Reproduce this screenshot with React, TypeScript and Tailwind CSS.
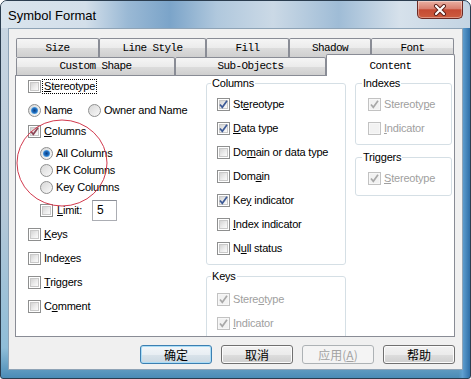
import type { ReactNode } from 'react';

function Box({ checked, disabled, mark = '#3d5a96' }: { checked?: boolean; disabled?: boolean; mark?: string }) {
    return (
        <span
            className={`relative flex h-[13px] w-[13px] shrink-0 items-center justify-center border ${
                disabled ? 'border-[#c2c2c2] bg-[#f7f7f7]' : 'border-[#8e8f8f] bg-white'
            }`}
        >
            <span
                className={`h-[9px] w-[9px] ${
                    disabled
                        ? 'bg-[#f2f2f2]'
                        : 'border border-[#c9c9c9] bg-[linear-gradient(135deg,#d4d4d4_0%,#eeeeee_60%,#fbfbfb_100%)]'
                }`}
            />
            {checked ? (
                <svg className="absolute left-0 top-0" width="11" height="11" viewBox="0 0 11 11">
                    <path d="M2 5.5 L4.3 8.3 L9 1.8" fill="none" stroke={disabled ? '#a8a8a8' : mark} strokeWidth="1.7" />
                </svg>
            ) : null}
        </span>
    );
}

function Radio({ on }: { on?: boolean }) {
    return (
        <span className="flex h-[13px] w-[13px] shrink-0 items-center justify-center rounded-full border border-[#8e8f8f] bg-[linear-gradient(135deg,#d8d8d8,#fafafa)]">
            {on ? (
                <span className="h-[7px] w-[7px] rounded-full bg-[radial-gradient(circle,#0b3f7e_0%,#1f6cc0_45%,#6fbdf0_80%,#c8e9fb_100%)]" />
            ) : (
                <span className="h-[9px] w-[9px] rounded-full bg-[linear-gradient(135deg,#dadada,#f6f6f6)]" />
            )}
        </span>
    );
}

function Check({
    label,
    checked,
    disabled,
    mark,
    className = '',
}: {
    label: ReactNode;
    checked?: boolean;
    disabled?: boolean;
    mark?: string;
    className?: string;
}) {
    return (
        <div className={`flex items-center gap-[3px] ${disabled ? 'text-[#a0a0a0]' : ''} ${className}`}>
            <Box checked={checked} disabled={disabled} mark={mark} />
            <span>{label}</span>
        </div>
    );
}

function Group({ title, children, className = '', inset = 'pl-[10px]' }: { title: string; children: ReactNode; className?: string; inset?: string }) {
    return (
        <fieldset className={`rounded-[3px] border border-[#d5dfe5] ${className}`}>
            <legend className={`px-[1px] leading-[14px] ${inset === 'pl-[10px]' ? 'ml-[4px]' : 'ml-[6px]'}`}>{title}</legend>
            <div className={`flex flex-col pt-[2px] ${inset}`}>{children}</div>
        </fieldset>
    );
}

const tab =
    'flex items-center justify-center rounded-t-[2px] border border-b-0 border-[#898c95] bg-[linear-gradient(180deg,#f5f5f5_0%,#ebebeb_50%,#dcdcdc_52%,#cfcfcf_100%)]';

function Button({ children, kind = 'normal' }: { children: ReactNode; kind?: 'default' | 'normal' | 'disabled' }) {
    const look =
        kind === 'default'
            ? 'border-[#3c7fb1] bg-[linear-gradient(180deg,#f2f6f9_0%,#e8eef3_50%,#d9e3ea_52%,#cbd8e2_100%)] shadow-[inset_0_0_0_1px_#a9dcf6]'
            : kind === 'disabled'
              ? 'border-[#adb2b5] bg-[#f4f4f4] text-[#a3a3a3]'
              : 'border-[#707070] bg-[linear-gradient(180deg,#f2f2f2_0%,#ebebeb_50%,#dddddd_52%,#cfcfcf_100%)] shadow-[inset_0_0_0_1px_#fcfcfc]';
    return (
        <div className={`flex h-[19px] w-[72px] items-center justify-center rounded-[3px] border ${look}`}>
            <span className="font-['Noto_Sans_CJK_SC',sans-serif] text-[12px] leading-none tracking-normal">{children}</span>
        </div>
    );
}

export default function App() {
    return (
        <div className="relative flex h-[379px] w-[471px] flex-col overflow-hidden rounded-t-[7px] rounded-b-[3px] border border-[#2b3d4f] bg-[linear-gradient(90deg,rgba(0,0,0,0)_97.6%,#5f9fd0_98.4%,#2f6fa8_100%),linear-gradient(180deg,#cbd8e4_0%,#b5c8d8_55%,#8fbdd8_92%,#4b8cb6_100%)] font-['Liberation_Sans',Arial,sans-serif] text-[11px] tracking-[-0.2px] text-black">
            {/* title bar */}
            <div className="flex h-[27px] shrink-0 items-start justify-between bg-[linear-gradient(90deg,#d9e4ed_0%,#d3dfea_18%,#9ab9d5_27%,#7ba4c9_36%,#b0c8dd_46%,#cbd9e6_58%,#9fbcd6_72%,#d6e1eb_85%,#c3d4e3_100%)] pl-[7px]">
                <span className="pt-[7px] text-[13px] leading-[16px] tracking-normal">Symbol Format</span>
                <div className="mr-[7px] flex h-[18px] w-[46px] items-center justify-center rounded-b-[5px] border border-t-0 border-[#6b2a24] bg-[linear-gradient(180deg,#eab0a2_0%,#d88070_45%,#c54a33_52%,#cc5c3f_100%)] shadow-[inset_0_0_0_1px_rgba(255,255,255,0.35)]">
                    <svg width="14" height="12" viewBox="0 0 14 12">
                        <path d="M3 2 L11 10 M11 2 L3 10" stroke="#5a1e18" strokeWidth="4" strokeLinecap="round" />
                        <path d="M3 2 L11 10 M11 2 L3 10" stroke="#ffffff" strokeWidth="2.2" strokeLinecap="round" />
                    </svg>
                </div>
            </div>

            {/* client area */}
            <div className="mx-[7px] flex h-[342px] shrink-0 flex-col border border-[#8ea3b6] bg-[#f0f0f0] pl-[6px] pt-[9px]">
                <div className="flex h-[19px] pl-[1px] font-['Liberation_Mono',monospace] text-[11px] tracking-[-0.6px]">
                    <div className={`${tab} w-[83px]`}>Size</div>
                    <div className={`${tab} w-[107px]`}>Line Style</div>
                    <div className={`${tab} w-[83px]`}>Fill</div>
                    <div className={`${tab} w-[82px]`}>Shadow</div>
                    <div className={`${tab} w-[83px]`}>Font</div>
                </div>
                <div className="flex h-[18px] items-start pl-[1px] font-['Liberation_Mono',monospace] text-[11px] tracking-[-0.6px]">
                    <div className={`${tab} h-[18px] w-[159px]`}>Custom Shape</div>
                    <div className={`${tab} h-[18px] w-[151px]`}>Sub-Objects</div>
                    <div className="relative z-10 -mt-[3px] flex h-[22px] w-[129px] justify-center rounded-t-[2px] border border-b-0 border-[#898c95] bg-white pt-[3px]">
                        Content
                    </div>
                </div>

                {/* tab page */}
                <div className="flex h-[262px] w-[440px] overflow-hidden border border-[#898c95] bg-white pl-[12px]">
                    <div className="flex w-[178px] shrink-0 flex-col">
                        <div className="flex h-[20px] items-center gap-[1px]">
                            <Box />
                            <span className="border border-dotted border-black px-[1px] leading-[13px]">
                                <u>S</u>tereotype
                            </span>
                        </div>
                        <div className="mt-[4px] flex h-[20px] items-center">
                            <Radio on />
                            <span className="ml-[3px] w-[44px]">Name</span>
                            <Radio />
                            <span className="ml-[3px]">Owner and Name</span>
                        </div>
                        <Check className="mt-[1px] h-[20px]" checked mark="#8b4656" label={<><u>C</u>olumns</>} />
                        <div className="mt-[4px] flex h-[17px] items-center gap-[3px] pl-[12px]">
                            <Radio on />
                            <span>All Columns</span>
                        </div>
                        <div className="flex h-[17px] items-center gap-[3px] pl-[12px]">
                            <Radio />
                            <span>PK Columns</span>
                        </div>
                        <div className="flex h-[17px] items-center gap-[3px] pl-[12px]">
                            <Radio />
                            <span>Key Columns</span>
                        </div>
                        <div className="mt-[3px] flex h-[22px] items-center pl-[12px]">
                            <Box />
                            <span className="ml-[4px] w-[35px]">
                                <u>L</u>imit:
                            </span>
                            <span className="flex h-[21px] w-[25px] items-center border border-[#abadb3] border-t-[#8b8e96] pl-[4px] text-[12px]">5</span>
                        </div>
                        <Check className="mt-[3px] h-[20px]" label={<><u>K</u>eys</>} />
                        <Check className="mt-[4px] h-[20px]" label={<>Inde<u>x</u>es</>} />
                        <Check className="mt-[4px] h-[20px]" label={<><u>T</u>riggers</>} />
                        <Check className="mt-[4px] h-[20px]" label={<>C<u>o</u>mment</>} />
                    </div>

                    <div className="flex w-[140px] shrink-0 flex-col">
                        <Group title="Columns" className="pb-[4px]">
                            <Check className="h-[24px]" checked label={<>St<u>e</u>reotype</>} />
                            <Check className="h-[24px]" checked label={<><u>D</u>ata type</>} />
                            <Check className="h-[24px]" label={<>Do<u>m</u>ain or data type</>} />
                            <Check className="h-[24px]" label={<>Dom<u>a</u>in</>} />
                            <Check className="h-[24px]" checked label={<>Ke<u>y</u> indicator</>} />
                            <Check className="h-[24px]" label={<><u>I</u>ndex indicator</>} />
                            <Check className="h-[24px]" label={<>N<u>u</u>ll status</>} />
                        </Group>
                        <Group title="Keys" className="mt-[4px] pb-[8px]">
                            <div className="pt-[2px]" />
                            <Check className="h-[24px]" checked disabled label={<>Stere<u>o</u>type</>} />
                            <Check className="h-[24px]" checked disabled label={<><u>I</u>ndicator</>} />
                        </Group>
                    </div>

                    <div className="ml-[9px] flex w-[97px] shrink-0 flex-col">
                        <Group title="Indexes" inset="pl-[12px]" className="pb-[4px]">
                            <Check className="h-[24px]" checked disabled label={<>Stereoty<u>p</u>e</>} />
                            <Check className="h-[24px]" disabled label={<><u>I</u>ndicator</>} />
                        </Group>
                        <Group title="Triggers" inset="pl-[12px]" className="mt-[5px] pb-[5px]">
                            <Check className="h-[24px]" checked disabled label={<><u>S</u>tereotype</>} />
                        </Group>
                    </div>
                </div>

                <div className="mt-[8px] flex w-[440px] justify-end gap-[9px]">
                    <Button kind="default">确定</Button>
                    <Button>取消</Button>
                    <Button kind="disabled">
                        应用(<u>A</u>)
                    </Button>
                    <Button>帮助</Button>
                </div>
            </div>

            {/* red annotation circle */}
            <svg className="pointer-events-none absolute left-[-1px] top-[-1px]" width="471" height="379">
                <ellipse cx="62" cy="163" rx="45" ry="43" fill="none" stroke="#d23a4e" strokeWidth="1" />
            </svg>
        </div>
    );
}
